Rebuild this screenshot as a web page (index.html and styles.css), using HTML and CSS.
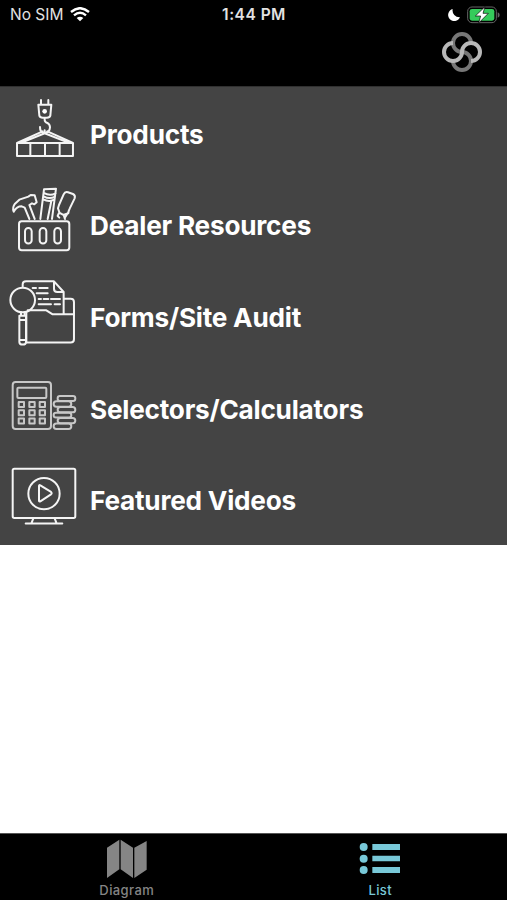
FILE: index.html
```html
<!DOCTYPE html>
<html lang="en">
<head>
  <meta charset="UTF-8">
  <title>Menu</title>
  <link rel="stylesheet" href="styles.css">
</head>
<body>
  <div class="phone">
    <header>
      <div class="status">
        <div class="carrier">
          <span>No SIM</span>
          <svg width="20" height="15" viewBox="0 0 60 45" fill="none" stroke="#fff" stroke-width="7">
            <path d="M3 15Q30-8 57 15M12 25Q30 9 48 25"/>
            <path d="M20 33Q30 25 40 33L30 43Z" fill="#fff" stroke="none"/>
          </svg>
        </div>
        <div class="time">1:44 PM</div>
        <div class="power">
          <svg width="14" height="14" viewBox="0 0 42 42"><path d="M17 3A21 21 0 0 0 39 28A18.5 18.5 0 1 1 17 3Z" fill="#fff"/></svg>
          <svg width="33" height="18" viewBox="0 0 99 54">
            <rect x="2" y="3" width="86" height="47" rx="13" fill="none" stroke="#656565" stroke-width="3"/>
            <rect x="8" y="9" width="74" height="35" rx="7" fill="#35cb5b"/>
            <path d="M92 19Q98 21 98 27T92 35Z" fill="#656565"/>
            <path d="M54 2L25 30H41L35 51L64 22H48Z" fill="#fff" stroke="#000" stroke-width="2"/>
          </svg>
        </div>
      </div>
      <svg class="logo" width="42" height="42" viewBox="0 0 126 126" fill="none" stroke-width="12">
        <path d="M90 36A27 27 0 1 0 63 63A27 27 0 1 1 36 90" stroke="#777"/>
        <path d="M36 36A27 27 0 1 0 63 63A27 27 0 1 1 90 90" stroke="#b8b8b8"/>
      </svg>
    </header>

    <ul class="menu">
      <li>
        <svg class="icon" viewBox="0 -9 252 275">
          <path d="M123 30V44M145 30V44M115 44H154L151 77Q149 83 141 83H128Q120 83 118 77ZM134 84V90Q134 96 142 99Q150 104 150 112Q149 125 138 128H130Q120 126 120 111M134 121V128"/>
          <circle class="dot" cx="134" cy="64" r="7"/>
          <path d="M128 124L51 159M142 124L219 159M51 159H219V198H51ZM65 158L134 130L205 158M91 160V198M135 160V198M179 160V198"/>
        </svg>
        <span>Products</span>
      </li>
      <li>
        <svg class="icon" viewBox="0 -4 252 275">
          <rect x="57" y="123" width="151" height="87" rx="8"/>
          <rect x="75" y="143" width="20" height="47" rx="10"/>
          <rect x="119" y="143" width="20" height="47" rx="10"/>
          <rect x="163" y="143" width="20" height="47" rx="10"/>
          <path d="M88 116L74 82L65 78Q50 78 41 94Q36 82 45 70L58 58L85 49L92 44L104 45L110 66L103 72L96 69L88 74L104 116"/>
          <path d="M121 116L132 27L168 25L156 116M143 116L154 62M131 38Q150 48 167 39M131 48Q148 58 165 49M130 57Q146 66 163 58"/>
          <path d="M191 42Q195 33 204 36L219 41Q227 45 224 54L209 85Q205 92 205 99L190 104L179 98L174 84L177 74ZM177 98L173 107L178 112M191 104L195 116M202 100L196 110"/>
        </svg>
        <span>Dealer Resources</span>
      </li>
      <li>
        <svg class="icon" viewBox="0 -5 252 275">
          <path d="M68 45V38Q68 29 78 29H162L191 61V127M162 31V51Q162 61 172 61H190M193 81H212Q222 81 222 91V203Q222 213 212 213H80M83 116H139L158 128H220M79 124V213"/>
          <path d="M98 49H108M118 49H143M110 65H143M116 82H123M131 82H145M153 82H180M116 98H153M164 98H180"/>
          <circle cx="68" cy="85" r="37"/>
          <path d="M63 122V132M74 122V132M58 132H78V211Q78 219 68 219T58 211ZM58 145H78M58 205H78"/>
        </svg>
        <span>Forms/Site Audit</span>
      </li>
      <li>
        <svg class="icon soft" viewBox="0 -25 252 275">
          <rect x="38" y="35" width="115" height="141" rx="9"/>
          <rect x="52" y="52" width="87" height="31" rx="3"/>
          <path d="M56 95H72V110H56ZM88 95H104V110H88ZM119 95H135V110H119ZM56 120H72V135H56ZM88 120H104V135H88ZM119 120H135V135H119ZM56 145H72V160H56ZM88 145H104V160H88ZM119 145H135V160H119Z"/>
          <rect x="173" y="77" width="53" height="15" rx="7"/>
          <rect x="161" y="93" width="53" height="16" rx="8"/>
          <rect x="173" y="110" width="53" height="16" rx="8"/>
          <rect x="161" y="127" width="53" height="15" rx="7"/>
          <rect x="173" y="143" width="53" height="16" rx="8"/>
          <rect x="161" y="160" width="53" height="16" rx="8"/>
        </svg>
        <span>Selectors/Calculators</span>
      </li>
      <li>
        <svg class="icon" viewBox="0 -20 252 275">
          <rect x="38" y="27" width="188" height="148" rx="5"/>
          <circle cx="132" cy="102" r="47"/>
          <path d="M117 79Q117 75 121 77L153 97Q157 101 153 104L121 125Q117 127 117 123ZM100 176L95 189M164 176L169 189M77 192H187"/>
        </svg>
        <span>Featured Videos</span>
      </li>
    </ul>

    <nav>
      <div class="tab">
        <svg width="42" height="40" viewBox="0 0 126 120" fill="#858585">
          <path d="M3 26L40 2V91L3 117ZM44 2L81 26V117L44 91ZM85 26L122 6V92L85 117Z"/>
        </svg>
        <span>Diagram</span>
      </div>
      <div class="tab active">
        <svg width="42" height="40" viewBox="0 0 126 120" fill="#78c8d8">
          <circle cx="14" cy="24" r="12"/>
          <circle cx="14" cy="59" r="12"/>
          <circle cx="14" cy="93" r="12"/>
          <path d="M40 15H123V33H40ZM40 50H123V67H40ZM40 84H123V102H40Z"/>
        </svg>
        <span>List</span>
      </div>
    </nav>
  </div>
</body>
</html>
```
FILE: styles.css
```css
body {
  margin: 0;
  background-color: #fff;
  font-family: Inter, "Liberation Sans", sans-serif;
}

.phone {
  display: flex;
  flex-direction: column;
  height: 100vh;
}

header {
  box-sizing: border-box;
  height: 87px;
  background-color: #000;
  border-bottom: 1px solid #303030;
}

.status {
  display: grid;
  grid-template-columns: 1fr auto 1fr;
  align-items: center;
  height: 29px;
  padding: 0 7px 0 10px;
  color: #e2e2e2;
  font-size: 15.5px;
}

.carrier {
  display: flex;
  align-items: center;
  gap: 7px;
}

.time {
  padding-right: 2px;
  font-weight: 600;
  letter-spacing: 0.5px;
}

.power {
  display: flex;
  align-items: center;
  justify-content: flex-end;
  gap: 6px;
}

.logo {
  display: block;
  margin: 2px 24px 0 auto;
}

.menu {
  display: grid;
  grid-template-rows: repeat(5, 1fr);
  height: 458px;
  margin: 0;
  padding: 0;
  list-style: none;
  background-color: #444;
}

.menu li {
  display: flex;
  align-items: center;
  color: #fff;
  font-size: 26.2px;
  font-weight: 700;
  letter-spacing: -0.23px;
  white-space: nowrap;
}

.menu span {
  padding-top: 3px;
}

.icon {
  width: 84px;
  height: 91.6px;
  margin-right: 6px;
  fill: none;
  stroke: #f4f4f4;
  stroke-width: 6;
  stroke-linecap: round;
  stroke-linejoin: round;
}

.icon.soft {
  stroke: #c8c8c8;
}

.icon .dot {
  fill: #fff;
  stroke: none;
}

nav {
  display: flex;
  box-sizing: border-box;
  height: 67px;
  margin-top: auto;
  background-color: #000;
  border-top: 1px solid #555;
}

.tab {
  display: flex;
  flex: 1;
  flex-direction: column;
  align-items: center;
  gap: 2px;
  padding-top: 5px;
  color: #858585;
  font-size: 13px;
  font-weight: 500;
  line-height: 18px;
  letter-spacing: 0.4px;
}

.active {
  color: #78c8d8;
}
```
